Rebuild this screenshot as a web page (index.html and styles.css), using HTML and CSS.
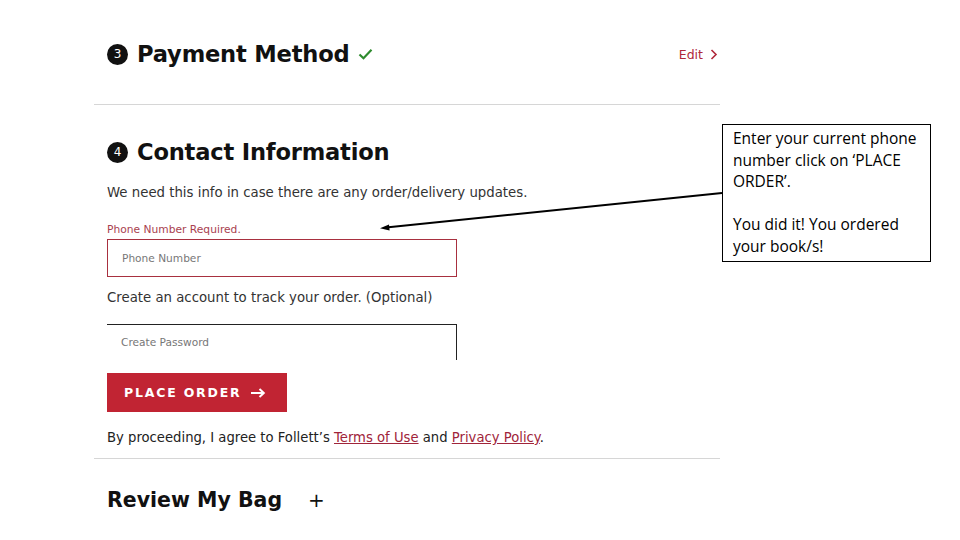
FILE: index.html
```html
<!DOCTYPE html>
<html>
<head>
<meta charset="utf-8">
<link rel="stylesheet" href="styles.css">
</head>
<body>
<div class="page">
  <main class="checkout">
    <section class="step step-done">
      <div class="step-head">
        <h2 class="step-title"><span class="num">3</span>Payment Method
          <svg class="check" width="15" height="12" viewBox="0 0 15 12"><path d="M1.5 6.5 L5.5 10.2 L13.5 1.8" fill="none" stroke="#2e8b2e" stroke-width="2.2"/></svg>
        </h2>
        <a class="edit">Edit <svg width="8" height="11" viewBox="0 0 8 11"><path d="M1.5 1 L6 5.5 L1.5 10" fill="none" stroke="#b0283a" stroke-width="1.6"/></svg></a>
      </div>
    </section>
    <section class="step step-contact">
      <h2 class="step-title"><span class="num">4</span>Contact Information</h2>
      <p class="lead">We need this info in case there are any order/delivery updates.</p>
      <p class="error">Phone Number Required.</p>
      <div class="field field-error">Phone Number</div>
      <p class="lead optional">Create an account to track your order. (Optional)</p>
      <div class="field field-cut">Create Password</div>
      <button class="place">PLACE ORDER <svg width="15" height="10" viewBox="0 0 15 10"><path d="M0 5 H12.5 M8.5 1 L12.8 5 L8.5 9" fill="none" stroke="#fff" stroke-width="2"/></svg></button>
      <p class="agree">By proceeding, I agree to Follett’s <a>Terms of Use</a> and <a>Privacy Policy</a>.</p>
    </section>
    <section class="step step-bag">
      <h2 class="bag-title">Review My Bag <span class="plus">+</span></h2>
    </section>
  </main>
  <svg class="arrow" width="960" height="540" viewBox="0 0 960 540">
    <line x1="722" y1="193" x2="386" y2="227.5" stroke="#000" stroke-width="2"/>
    <path d="M380 228.2 L389 224.6 L389.6 230.4 Z" fill="#000"/>
  </svg>
  <div class="callout">
    <p>Enter your current phone number click on ‘PLACE ORDER’.</p>
    <p>You did it! You ordered your book/s!</p>
  </div>
</div>
</body>
</html>
```
FILE: styles.css
```css
* { box-sizing: border-box; }
html, body { margin: 0; padding: 0; background: #fff; }
body { width: 960px; height: 540px; overflow: hidden; font-family: "DejaVu Sans", "Noto Sans", sans-serif; color: #222; }
.page { position: relative; width: 960px; height: 540px; }
.checkout { margin-left: 94px; width: 626px; }
.step { padding: 0 2px 0 13px; }
.step-done { padding-top: 39px; height: 105px; border-bottom: 1px solid #d6d6d6; }
.step-head { display: flex; justify-content: space-between; align-items: center; }
.step-title { margin: 0; display: flex; align-items: center; font-size: 22.6px; line-height: 30px; font-weight: 700; color: #111; letter-spacing: -0.2px; }
.num { display: inline-flex; width: 21px; height: 21px; border-radius: 50%; background: #111; color: #fff; font-size: 12px; font-weight: 400; align-items: center; justify-content: center; margin-right: 9px; letter-spacing: 0; }
.check { margin-left: 9px; }
.edit { color: #b0283a; font-size: 12.5px; display: inline-flex; align-items: center; gap: 7px; font-weight: 500; margin-top: 1px; }
.step-contact { padding-top: 32px; border-bottom: 1px solid #d6d6d6; padding-bottom: 10px; }
.lead { margin: 16px 0 0; font-size: 13.3px; line-height: 20px; color: #333; }
.error { margin: 20px 0 0; font-size: 10.7px; line-height: 14px; color: #a9414f; }
.field { margin-top: 2px; width: 350px; height: 38px; border: 1px solid #a8303f; padding: 0 14px; display: flex; align-items: center; font-size: 10.6px; color: #777; }
.optional { margin-top: 11px; }
.field-cut { margin-top: 16px; height: 36px; border: none; border-top: 1px solid #222; border-right: 1px solid #222; align-items: flex-start; padding-top: 11px; }
.place { margin-top: 13px; width: 180px; height: 39px; background: #c12433; border: none; color: #fff; font-family: "DejaVu Sans", sans-serif; font-weight: 700; font-size: 12.5px; letter-spacing: 1.8px; text-align: left; padding: 0 0 0 17px; display: flex; align-items: center; gap: 10px; }
.agree { margin: 16px 0 0; font-size: 13.2px; line-height: 20px; color: #222; }
.agree a { color: #a0243a; text-decoration: underline; }
.step-bag { padding-top: 27px; }
.bag-title { margin: 0; font-size: 20.5px; line-height: 28px; font-weight: 700; color: #111; display: flex; align-items: center; }
.plus { font-weight: 400; margin-left: 26px; font-size: 20px; }
.arrow { position: absolute; left: 0; top: 0; pointer-events: none; }
.callout { position: absolute; left: 722px; top: 124px; width: 209px; height: 138px; border: 1px solid #000; background: #fff; padding: 3px 6px 0 10px; font-family: "Open Sans", Lato, sans-serif; font-size: 15.5px; line-height: 21.5px; color: #000; }
.callout p { margin: 0 0 21.5px; }
```
